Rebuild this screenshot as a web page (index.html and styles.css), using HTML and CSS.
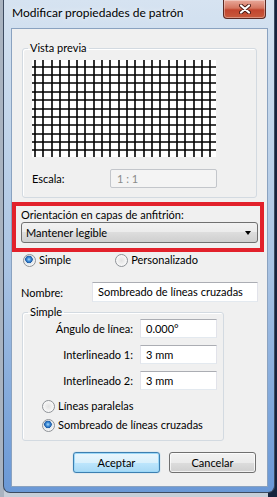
FILE: index.html
```html
<!DOCTYPE html>
<html lang="es">
<head>
    <meta charset="UTF-8">
    <title>Modificar propiedades de patrón</title>
    <link rel="stylesheet" href="styles.css">
</head>
<body>
    <div class="window">
        <div class="titlebar">
            <span class="title">Modificar propiedades de patrón</span>
            <span class="close-btn">
                <svg width="12" height="10" viewBox="0 0 12 10">
                    <path d="M2 1.5 L10 8.5 M10 1.5 L2 8.5" stroke="#4a1a14" stroke-width="4" stroke-linecap="round"/>
                    <path d="M2 1.5 L10 8.5 M10 1.5 L2 8.5" stroke="#fff" stroke-width="2.2" stroke-linecap="round"/>
                </svg>
            </span>
        </div>

        <div class="client">
            <!-- Vista previa -->
            <fieldset class="group preview-group">
                <legend>Vista previa</legend>
                <div class="group-body">
                    <svg class="preview" width="184" height="97" viewBox="0 0 184 97">
                        <rect width="184" height="97" fill="#fff"/>
                        <path stroke="#000" stroke-width="1.6"
                              d="M3 0V97 M11 0V97 M20 0V97 M28 0V97 M37 0V97 M45 0V97 M53 0V97 M62 0V97 M70 0V97 M78 0V97 M87 0V97
                                 M95 0V97 M103 0V97 M112 0V97 M120 0V97 M128 0V97 M137 0V97 M145 0V97 M153 0V97 M162 0V97 M170 0V97 M178 0V97
                                 M0 7H184 M0 15H184 M0 23H184 M0 32H184 M0 40H184 M0 49H184 M0 57H184 M0 65H184 M0 74H184 M0 82H184 M0 90H184"/>
                    </svg>
                    <div class="scale-row">
                        <span class="scale-label">Escala:</span>
                        <div class="textbox disabled">1 : 1</div>
                    </div>
                </div>
            </fieldset>

            <!-- Orientación -->
            <div class="highlight">
                <div class="field-label">Orientación en capas de anfitrión:</div>
                <div class="combo">
                    <span>Mantener legible</span>
                    <span class="combo-arrow"></span>
                </div>
            </div>

            <div class="radio-row type-row">
                <span class="radio-item"><span class="radio checked"></span>Simple</span>
                <span class="radio-item custom"><span class="radio"></span>Personalizado</span>
            </div>

            <div class="name-row">
                <span class="name-label">Nombre:</span>
                <div class="textbox name-box">Sombreado de líneas cruzadas</div>
            </div>

            <!-- Simple -->
            <fieldset class="group simple-group">
                <legend>Simple</legend>
                <div class="group-body">
                    <div class="param-row">
                        <span class="param-label">Ángulo de línea:</span>
                        <div class="textbox param-box">0.000°</div>
                    </div>
                    <div class="param-row">
                        <span class="param-label">Interlineado 1:</span>
                        <div class="textbox param-box">3 mm</div>
                    </div>
                    <div class="param-row">
                        <span class="param-label">Interlineado 2:</span>
                        <div class="textbox param-box">3 mm</div>
                    </div>
                    <div class="radio-item line-option first"><span class="radio"></span>Líneas paralelas</div>
                    <div class="radio-item line-option"><span class="radio checked"></span>Sombreado de líneas cruzadas</div>
                </div>
            </fieldset>

            <div class="buttons">
                <button class="btn default">Aceptar</button>
                <button class="btn">Cancelar</button>
            </div>
        </div>
    </div>
</body>
</html>
```

FILE: styles.css
```css
* {
    box-sizing: border-box;
}

body {
    margin: 0;
    width: 277px;
    height: 497px;
    overflow: hidden;
    font-family: Lato, "Open Sans", sans-serif;
    font-size: 11px;
    color: #000;
    background: linear-gradient(90deg, #a9b3c0 0 4px, #c6ced8 4px 268px, #17233d 268px);
}

/* ventana */
.window {
    margin-left: 3px;
    width: 272px;
    height: 493px;
    padding: 0 6px 5px 7px;
    border: 1px solid #3d4b60;
    border-top: none;
    border-radius: 0 0 7px 7px;
    background: linear-gradient(#d6e3f1 0%, #c2d5ea 25%, #a9c3e3 55%, #7ea6da 85%, #6a98d6 100%);
    display: flex;
    flex-direction: column;
}

.titlebar {
    height: 28px;
    display: flex;
    align-items: flex-start;
    flex-shrink: 0;
}

.title {
    font-size: 12px;
    line-height: 16px;
    padding: 5px 0 0 1px;
    text-shadow: 0 0 6px rgba(255, 255, 255, 0.9);
}

.close-btn {
    margin-left: auto;
    margin-right: 2px;
    width: 43px;
    height: 19px;
    border: 1px solid #5a2a24;
    border-top: none;
    border-radius: 0 0 4px 4px;
    background: linear-gradient(#e9a99b 0%, #d47560 45%, #c2452e 55%, #c85a3c 100%);
    box-shadow: inset 0 0 0 1px rgba(255, 255, 255, 0.35);
    display: flex;
    align-items: center;
    justify-content: center;
}

.client {
    flex: 1;
    background: #f0f0f0;
    border: 1px solid #8aa2c0;
}

/* grupos */
.group {
    margin: 0;
    padding: 0;
    border: 1px solid #d3dae1;
    border-radius: 3px;
    box-shadow: inset 1px 1px 0 #fff;
}

.group legend {
    padding: 0 2px;
    margin-left: 5px;
    line-height: 14px;
}

.preview-group {
    margin: 12px 0 0 10px;
    width: 235px;
}

.preview-group .group-body {
    padding: 5px 0 9px 9px;
}

.preview {
    display: block;
}

.scale-row {
    margin-top: 12px;
    display: flex;
    align-items: center;
}

.scale-label {
    width: 78px;
}

.textbox {
    height: 20px;
    line-height: 18px;
    padding-left: 5px;
    background: #fff;
    border: 1px solid #abadb3;
    border-color: #abadb3 #e2e3ea #e3e9ef #e2e3ea;
    white-space: nowrap;
}

.textbox.disabled {
    width: 107px;
    height: 19px;
    background: #f4f4f4;
    border: 1px solid #c3c6cb;
    border-radius: 2px;
    color: #8a8a8a;
    padding-left: 6px;
}

/* recuadro rojo */
.highlight {
    margin-top: 4px;
    width: 252px;
    border: 4px solid #e2212b;
    padding: 2px 2px 5px 5px;
}

.field-label {
    line-height: 14px;
}

.combo {
    height: 21px;
    padding: 0 6px 0 4px;
    border: 1px solid #707070;
    border-radius: 3px;
    background: linear-gradient(#f2f2f2 0%, #ebebeb 50%, #dddddd 50%, #cfcfcf 100%);
    display: flex;
    align-items: center;
    justify-content: space-between;
}

.combo-arrow {
    width: 0;
    height: 0;
    border-left: 3.5px solid transparent;
    border-right: 3.5px solid transparent;
    border-top: 4px solid #000;
}

/* radios */
.radio-item {
    display: flex;
    align-items: center;
    line-height: 14px;
}

.radio {
    width: 13px;
    height: 13px;
    margin-right: 3px;
    border-radius: 50%;
    border: 1px solid #8e9297;
    background: radial-gradient(circle at 50% 50%, #e2e2e2 0, #eeeeee 3px, #fbfbfb 6px);
    flex-shrink: 0;
}

.radio.checked {
    background: radial-gradient(circle at 45% 40%, #a9dbfa 0, #3d8ad6 2px, #1c5ba6 3.5px, #dde4ea 4px, #f4f4f4 6px);
}

.type-row {
    display: flex;
    margin-top: 1px;
    padding-left: 11px;
}

.type-row .custom {
    margin-left: 44px;
}

.name-row {
    margin-top: 15px;
    padding-left: 9px;
    display: flex;
    align-items: center;
}

.name-label {
    width: 71px;
}

.name-box {
    width: 166px;
}

.simple-group {
    margin: 3px 0 0 10px;
    width: 202px;
}

.simple-group .group-body {
    padding: 0 0 8px 0;
}

.param-row {
    display: flex;
    align-items: center;
    margin-bottom: 7px;
}

.param-label {
    width: 110px;
    text-align: right;
    margin-right: 7px;
}

.param-box {
    width: 77px;
    height: 19px;
    line-height: 17px;
}

.line-option {
    padding-left: 19px;
}

.line-option.first {
    margin-top: 9px;
    margin-bottom: 5px;
}

/* botones */
.buttons {
    margin-top: 11px;
    padding-right: 11px;
    display: flex;
    justify-content: flex-end;
    gap: 9px;
}

.btn {
    width: 87px;
    height: 21px;
    padding: 0;
    font-family: inherit;
    font-size: 11px;
    color: #000;
    border: 1px solid #707070;
    border-radius: 3px;
    background: linear-gradient(#f2f2f2 0%, #ebebeb 50%, #dddddd 50%, #cfcfcf 100%);
    box-shadow: inset 0 0 0 1px rgba(255, 255, 255, 0.7);
}

.btn.default {
    border-color: #3c7fb1;
    background: linear-gradient(#eaf6fd 0%, #d9f0fc 50%, #bee6fd 50%, #a7d9f5 100%);
    box-shadow: inset 0 0 0 1px #9cd8f8, 0 0 1px #58a8dc;
}
```
